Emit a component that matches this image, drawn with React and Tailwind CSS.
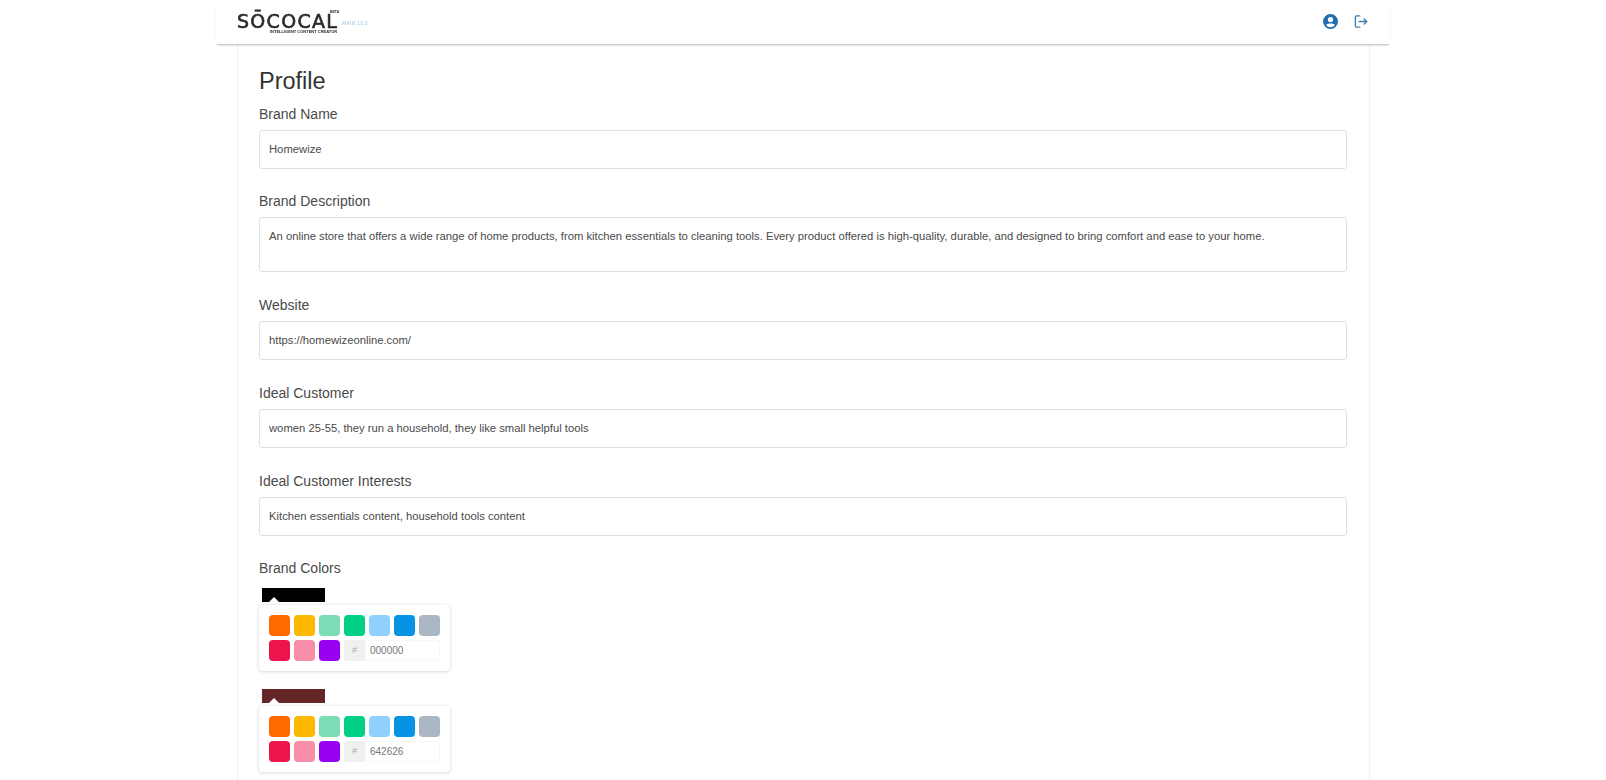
const font = { fontFamily: '"Liberation Sans", Arial, sans-serif' };

const row1 = ['bg-[#ff6900]', 'bg-[#fcb900]', 'bg-[#7bdcb5]', 'bg-[#00d084]', 'bg-[#8ed1fc]', 'bg-[#0693e3]', 'bg-[#abb8c3]'];
const row2 = ['bg-[#eb144c]', 'bg-[#f78da7]', 'bg-[#9900ef]'];

const fields = [
  { label: 'Brand Name', value: 'Homewize' },
  {
    label: 'Brand Description',
    value:
      'An online store that offers a wide range of home products, from kitchen essentials to cleaning tools. Every product offered is high-quality, durable, and designed to bring comfort and ease to your home.',
    multi: true,
  },
  { label: 'Website', value: 'https://homewizeonline.com/' },
  { label: 'Ideal Customer', value: 'women 25-55, they run a household, they like small helpful tools' },
  { label: 'Ideal Customer Interests', value: 'Kitchen essentials content, household tools content' },
];

function Field({ label, value, multi }) {
  return (
    <div className="mb-[22px] first:mb-[21px]">
      <label className="block h-[22px] mb-[5px] text-[14px] leading-[22px] text-[#4a4a4a]">{label}</label>
      {multi ? (
        <textarea
          readOnly
          value={value}
          className="block w-full h-[55px] px-[9px] py-[11px] text-[11.25px] leading-[14px] text-[#4a4a4a] bg-white border border-[#e0e0e0] rounded-[3px] resize-none outline-none"
        />
      ) : (
        <input
          readOnly
          value={value}
          className="block w-full h-[39px] px-[9px] pb-[2px] text-[11.25px] text-[#4a4a4a] bg-white border border-[#e0e0e0] rounded-[3px] outline-none"
        />
      )}
    </div>
  );
}

function ColorPicker({ color, hex }) {
  return (
    <div className="mb-[18px]">
      <div className={`relative w-[63px] h-[14px] ml-[3px] ${color}`}>
        <div className="absolute left-[7px] bottom-0 w-0 h-0 border-x-[5px] border-x-transparent border-b-[5px] border-b-white" />
      </div>
      <div className="w-[191px] h-[66px] mt-[3px] p-[10px] bg-white rounded-[4px] shadow-[0_0_2px_rgba(0,0,0,0.1),0_1px_4px_rgba(0,0,0,0.12)]">
        <div className="flex gap-[4px] mb-[4px]">
          {row1.map((c) => (
            <div key={c} className={`w-[21px] h-[21px] rounded-[4px] ${c}`} />
          ))}
        </div>
        <div className="flex gap-[4px]">
          {row2.map((c) => (
            <div key={c} className={`w-[21px] h-[21px] rounded-[4px] ${c}`} />
          ))}
          <div className="flex items-center justify-center w-[21px] h-[21px] bg-[#f0f0f0] rounded-l-[3px] text-[9px] text-[#aaa]">#</div>
          <div className="flex items-center w-[75px] -ml-[4px] h-[21px] pl-[5px] text-[10px] text-[#777] shadow-[inset_0_0_0_1px_#f7f7f7] rounded-r-[3px]">{hex}</div>
        </div>
      </div>
    </div>
  );
}

function Logo() {
  return (
    <div className="flex items-start ml-[21px]">
      <div className="relative w-[99px] h-[24px] text-[#2a2a2a] blur-[0.4px]">
        <div className="mt-[3px] text-[19px] leading-[14px] tracking-[1.300px] whitespace-nowrap [-webkit-text-stroke:0.6px_#2a2a2a]" style={{ fontFamily: '"DejaVu Sans", sans-serif' }}>
          SŌCOCAL
        </div>
        <div className="absolute left-[33px] top-[18px] text-[4px] leading-[6px] font-bold whitespace-nowrap">INTELLIGENT CONTENT CREATOR</div>
      </div>
      <div className="-mt-[1px] -ml-[6px] text-[3.500px] leading-[4px] font-bold text-[#2a2a2a] blur-[0.3px]">BETA</div>
      <div className="mt-[10px] ml-[3px] text-[4.500px] leading-[6px] tracking-[0.5px] text-[#8fc4e8] blur-[0.3px] whitespace-nowrap">MAIN 13.0</div>
    </div>
  );
}

export default function App() {
  return (
    <div className="h-[780px] overflow-hidden bg-white" style={font}>
      <div className="w-[1174px] mx-auto">
        <header className="relative z-10 flex items-center justify-between h-[44px] pr-[21px] bg-white shadow-[0_2px_2px_-1px_rgba(0,0,0,0.3)]">
          <div className="pt-[2px]">
            <Logo />
          </div>
          <div className="flex items-center gap-[15px] pb-[2px]">
            <svg width="15" height="15" viewBox="0 0 24 24" fill="#1f6fb0">
              <path d="M12 0a12 12 0 1 0 0 24 12 12 0 0 0 0-24zm0 4.6a4.2 4.2 0 1 1 0 8.4 4.2 4.2 0 0 1 0-8.4zm0 16.6a9.2 9.2 0 0 1-7-3.3c.9-1.8 2.700-2.900 4.700-2.900h4.600c2 0 3.800 1.100 4.700 2.900a9.200 9.200 0 0 1-7 3.300z" />
            </svg>
            <svg width="16" height="15" viewBox="0 0 24 24" fill="none" stroke="#3f7fae" strokeWidth="2.200" strokeLinecap="round" strokeLinejoin="round">
              <path d="M10 3H5a2 2 0 0 0-2 2v14a2 2 0 0 0 2 2h5" />
              <path d="M9 12h12" />
              <path d="M17 8l4 4-4 4" />
            </svg>
          </div>
        </header>
        <main className="w-[1133px] h-[736px] ml-[21px] pl-[21px] pr-[22px] pt-[23px] border-x border-[#f0f0f0]">
          <h1 className="h-[28px] mb-[8px] text-[23.500px] leading-[28px] text-[#333]">Profile</h1>
          <div>
            {fields.map((f) => (
              <Field key={f.label} {...f} />
            ))}
          </div>
          <div className="h-[22px] -mt-[1px] mb-[9px] text-[14px] leading-[22px] text-[#4a4a4a]">Brand Colors</div>
          <ColorPicker color="bg-black" hex="000000" />
          <ColorPicker color="bg-[#642626]" hex="642626" />
        </main>
      </div>
    </div>
  );
}
